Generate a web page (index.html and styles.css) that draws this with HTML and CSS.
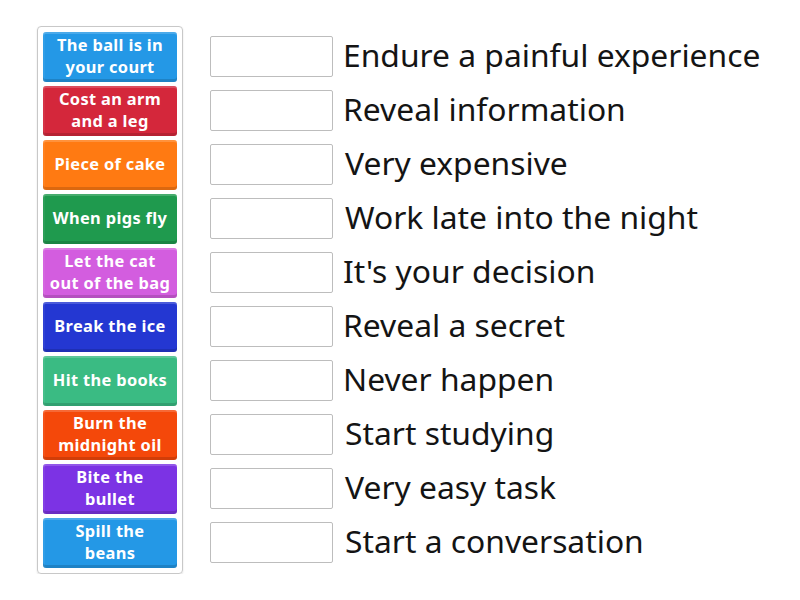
FILE: index.html
```html
<!DOCTYPE html>
<html>
<head>
<meta charset="utf-8">
<link rel="stylesheet" href="styles.css">
</head>
<body>
<div class="page">
  <div class="bank">
    <div class="tile c1"><span class="ln">The ball is in</span><span class="ln">your court</span></div>
    <div class="tile c2"><span class="ln">Cost an arm</span><span class="ln">and a leg</span></div>
    <div class="tile c3"><span class="ln">Piece of cake</span></div>
    <div class="tile c4"><span class="ln">When pigs fly</span></div>
    <div class="tile c5"><span class="ln">Let the cat</span><span class="ln">out of the bag</span></div>
    <div class="tile c6"><span class="ln">Break the ice</span></div>
    <div class="tile c7"><span class="ln">Hit the books</span></div>
    <div class="tile c8"><span class="ln">Burn the</span><span class="ln">midnight oil</span></div>
    <div class="tile c9"><span class="ln">Bite the</span><span class="ln">bullet</span></div>
    <div class="tile c10"><span class="ln">Spill the</span><span class="ln">beans</span></div>
  </div>
  <div class="rows">
    <div class="row"><div class="slot"></div><div class="label">Endure a painful experience</div></div>
    <div class="row"><div class="slot"></div><div class="label">Reveal information</div></div>
    <div class="row"><div class="slot"></div><div class="label lv">Very expensive</div></div>
    <div class="row"><div class="slot"></div><div class="label lv">Work late into the night</div></div>
    <div class="row"><div class="slot"></div><div class="label">It's your decision</div></div>
    <div class="row"><div class="slot"></div><div class="label">Reveal a secret</div></div>
    <div class="row"><div class="slot"></div><div class="label">Never happen</div></div>
    <div class="row"><div class="slot"></div><div class="label lv">Start studying</div></div>
    <div class="row"><div class="slot"></div><div class="label lv">Very easy task</div></div>
    <div class="row"><div class="slot"></div><div class="label lv">Start a conversation</div></div>
  </div>
</div>
</body>
</html>
```
FILE: styles.css
```css
html, body {
  margin: 0;
  padding: 0;
  background: #ffffff;
}
body {
  font-family: "Noto Sans", "Open Sans", sans-serif;
  color: #111;
}
.page {
  display: flex;
  align-items: flex-start;
  padding: 26px 0 0 37px;
}
.bank {
  display: flex;
  flex-direction: column;
  gap: 4px;
  padding: 5px;
  width: 134px;
  border: 1px solid #c8c8c8;
  border-radius: 4px;
  box-shadow: 0 1px 2px rgba(0,0,0,0.12);
}
.tile {
  height: 50px;
  box-sizing: border-box;
  border-radius: 3px;
  display: flex;
  flex-direction: column;
  align-items: center;
  justify-content: center;
  text-align: center;
  color: #fff;
  font-weight: 700;
  font-size: 16.4px;
  line-height: 22.5px;
  padding: 0 1px 2px;
  letter-spacing: 0.35px;
  white-space: nowrap;
  box-shadow: inset 0 2px 0 rgba(255,255,255,0.18), inset 0 -3px 0 rgba(0,0,0,0.14), inset 2px 0 0 rgba(255,255,255,0.06);
}
.ln {
  display: block;
  height: 22.5px;
  line-height: 22.5px;
}
.c1 { background: #2498e6; }
.c2 { background: #d4273b; }
.c3 { background: #ff7a12; }
.c4 { background: #1f9a4e; }
.c5 { background: #d35ddf; }
.c6 { background: #2437d2; }
.c7 { background: #3abb83; }
.c8 { background: #f4480a; }
.c9 { background: #7c33e4; }
.c10 { background: #2498e6; }
.rows {
  display: flex;
  flex-direction: column;
  gap: 13px;
  margin-left: 27px;
  padding-top: 10px;
}
.row {
  display: flex;
  align-items: center;
  height: 41px;
}
.slot {
  width: 123px;
  height: 41px;
  box-sizing: border-box;
  border: 1px solid #bdbdbd;
  border-radius: 2px;
  background: #fff;
  flex: none;
}
.label {
  margin-left: 10px;
  font-size: 31.8px;
  line-height: 40px;
  margin-bottom: 4px;
  white-space: nowrap;
  color: #141414;
}
.label.lv {
  margin-left: 12px;
}
```
